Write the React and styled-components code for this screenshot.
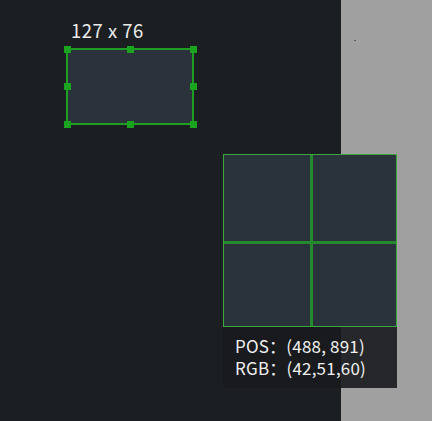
import React from "react";
import styled, { createGlobalStyle } from "styled-components";

const GlobalStyle = createGlobalStyle`
  html, body { margin: 0; padding: 0; background: #1b1f22; }
  body { font-family: "Noto Sans CJK SC", "Noto Sans", sans-serif; }
`;

const Screen = styled.div`
  position: relative;
  width: 432px;
  height: 421px;
  display: flex;
  overflow: hidden;
`;

const DarkArea = styled.div`
  flex: 0 0 341px;
  background: #1b1f22;
`;

const GrayArea = styled.div`
  flex: 1;
  position: relative;
  background: #a0a0a0;
`;

const Speck = styled.span`
  position: absolute;
  left: 13px;
  top: 40px;
  width: 2px;
  height: 1px;
  background: #5a5a5a;
`;

const Capture = styled.div`
  position: absolute;
  left: 66px;
  top: 18px;
  display: flex;
  flex-direction: column;
  gap: 6px;
`;

const SizeLabel = styled.div`
  padding-left: 5px;
  color: #ececec;
  font-size: 18.5px;
  letter-spacing: 0.5px;
  line-height: 24px;
  white-space: nowrap;
`;

const Selection = styled.div`
  position: relative;
  width: 128px;
  height: 77px;
  box-sizing: border-box;
  border: 2px solid #1f9e24;
  background: #2b323c;
`;

const Handle = styled.span`
  position: absolute;
  width: 7px;
  height: 7px;
  background: #1aa31f;
  left: ${(p) => (p.$x === 0 ? "-4.5px" : p.$x === 1 ? "calc(50% - 3.5px)" : "calc(100% - 2.5px)")};
  top: ${(p) => (p.$y === 0 ? "-4.5px" : p.$y === 1 ? "calc(50% - 3.5px)" : "calc(100% - 2.5px)")};
`;

const Loupe = styled.div`
  position: absolute;
  left: 223px;
  top: 154px;
  width: 174px;
  display: flex;
  flex-direction: column;
`;

const Magnifier = styled.div`
  height: 173px;
  box-sizing: border-box;
  border: 1px solid #3aa83c;
  display: grid;
  grid-template-columns: 86px 1fr;
  grid-template-rows: 86px 1fr;
  gap: 3px;
  background: #258a2d;
`;

const Pixel = styled.div`
  background: #2a333c;
`;

const InfoBox = styled.div`
  height: 61px;
  box-sizing: border-box;
  padding: 8px 0 0 12px;
  display: flex;
  flex-direction: column;
  background: rgba(24, 25, 29, 0.9);
  color: #f0f0f0;
  font-size: 17px;
  letter-spacing: 0.2px;
  line-height: 22px;
  white-space: nowrap;
`;

const InfoLine = styled.div``;

const handles = [
  [0, 0], [1, 0], [2, 0],
  [0, 1], [2, 1],
  [0, 2], [1, 2], [2, 2],
];

export default function App() {
  return (
    <>
      <GlobalStyle />
      <Screen>
        <DarkArea />
        <GrayArea>
          <Speck />
        </GrayArea>
        <Capture>
          <SizeLabel>127 x 76</SizeLabel>
          <Selection>
            {handles.map(([x, y]) => (
              <Handle key={`${x}-${y}`} $x={x} $y={y} />
            ))}
          </Selection>
        </Capture>
        <Loupe>
          <Magnifier>
            <Pixel />
            <Pixel />
            <Pixel />
            <Pixel />
          </Magnifier>
          <InfoBox>
            <InfoLine>POS：(488, 891)</InfoLine>
            <InfoLine>RGB：(42,51,60)</InfoLine>
          </InfoBox>
        </Loupe>
      </Screen>
    </>
  );
}
